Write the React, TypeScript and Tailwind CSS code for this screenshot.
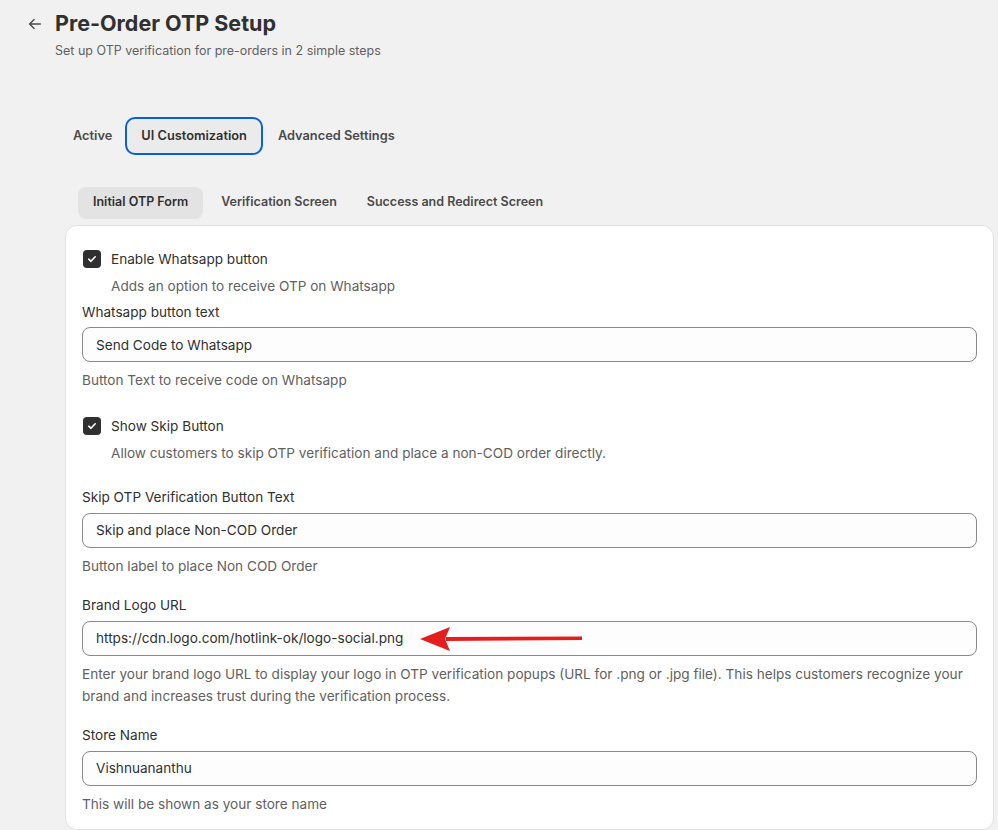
import React, { useState } from 'react';

const Check: React.FC<{ label: string; help: string }> = ({ label, help }) => (
  <div>
    <label className="flex items-center gap-[10px] h-[22px]">
      <span className="w-[18px] h-[18px] rounded-[4px] bg-[#303030] flex items-center justify-center ml-[1px]">
        <svg width="12" height="12" viewBox="0 0 12 12" fill="none">
          <path d="M2.8 6.2 L5 8.3 L9.2 3.8" stroke="white" strokeWidth="1.6" strokeLinecap="round" strokeLinejoin="round" />
        </svg>
      </span>
      <span className="text-[#303030]">{label}</span>
    </label>
    <p className="pl-[29px] mt-[6px] text-[#616161]">{help}</p>
  </div>
);

const Field: React.FC<{ label: string; value: string; help: React.ReactNode; arrow?: boolean }> = ({ label, value, help, arrow }) => (
  <div>
    <div className="text-[#303030] h-[20px] flex items-center">{label}</div>
    <div className="relative mt-[5px]">
      <input
        readOnly
        value={value}
        className="w-full h-[35px] rounded-[8px] border border-[#8a8a8a] bg-[#fdfdfd] px-[13px] text-[#303030] outline-none"
      />
      {arrow && (
        <svg className="absolute left-[338px] top-[5px]" width="164" height="26" viewBox="0 0 164 26">
          <path d="M26 11 L162 10.5 L162 14 L26 15 Z" fill="#e41e1e" />
          <path d="M0 13 L30 1 L25 13 L30 25 Z" fill="#e41e1e" />
        </svg>
      )}
    </div>
    <div className="mt-[7px] text-[#616161] leading-[22px]">{help}</div>
  </div>
);

export default function App() {
  const [tab] = useState('ui');
  return (
    <div className="min-h-screen bg-[#f1f1f1] text-[13.6px] text-[#303030]" style={{ fontFamily: 'Inter, "Noto Sans", sans-serif' }}>
      <div className="pl-[26px] pt-[10px]">
        <div className="flex items-center gap-[11px]">
          <svg width="18" height="18" viewBox="0 0 20 20" fill="none" className="mt-[1px]">
            <path d="M16 10H4.5M9 5 L4 10 L9 15" stroke="#4a4a4a" strokeWidth="1.5" strokeLinecap="round" strokeLinejoin="round" />
          </svg>
          <h1 className="text-[21.5px] font-bold text-[#303030] leading-[26px]">Pre-Order OTP Setup</h1>
        </div>
        <p className="pl-[29px] mt-[6px] text-[12.5px] text-[#616161]">Set up OTP verification for pre-orders in 2 simple steps</p>
      </div>

      <div className="pl-[65px] pr-[4px] mt-[56px]">
        <div className="flex items-center font-semibold text-[12.8px] text-[#4a4a4a]">
          <button className="px-[8px] h-[38px] rounded-[8px]">Active</button>
          <button className="px-[14px] h-[38px] rounded-[10px] bg-[#ebebeb] border-2 border-[#0a60d6] text-[#303030] ml-[5px]">
            {tab === 'ui' ? 'UI Customization' : ''}
          </button>
          <button className="px-[15px] h-[38px] rounded-[8px]">Advanced Settings</button>
        </div>

        <div className="flex items-center mt-[32px] ml-[13px] font-semibold text-[12.5px] text-[#4a4a4a]">
          <button className="px-[15px] h-[32px] rounded-[8px] bg-[#e3e3e3] text-[#303030]">Initial OTP Form</button>
          <button className="px-[18px] h-[32px] rounded-[8px]">Verification Screen</button>
          <button className="px-[12px] h-[32px] rounded-[8px]">Success and Redirect Screen</button>
        </div>

        <div className="mt-[6px] bg-white rounded-[12px] border border-[#e3e3e3] px-[16px] pt-[22px] pb-[14px] flex flex-col">
          <Check label="Enable Whatsapp button" help="Adds an option to receive OTP on Whatsapp" />
          <div className="mt-[6px]">
            <Field label="Whatsapp button text" value="Send Code to Whatsapp" help="Button Text to receive code on Whatsapp" />
          </div>
          <div className="mt-[24px]">
            <Check label="Show Skip Button" help="Allow customers to skip OTP verification and place a non-COD order directly." />
          </div>
          <div className="mt-[24px]">
            <Field label="Skip OTP Verification Button Text" value="Skip and place Non-COD Order" help="Button label to place Non COD Order" />
          </div>
          <div className="mt-[19px]">
            <Field
              label="Brand Logo URL"
              value="https://cdn.logo.com/hotlink-ok/logo-social.png"
              arrow
              help="Enter your brand logo URL to display your logo in OTP verification popups (URL for .png or .jpg file). This helps customers recognize your brand and increases trust during the verification process."
            />
          </div>
          <div className="mt-[19px]">
            <Field label="Store Name" value="Vishnuananthu" help="This will be shown as your store name" />
          </div>
        </div>
      </div>
    </div>
  );
}
